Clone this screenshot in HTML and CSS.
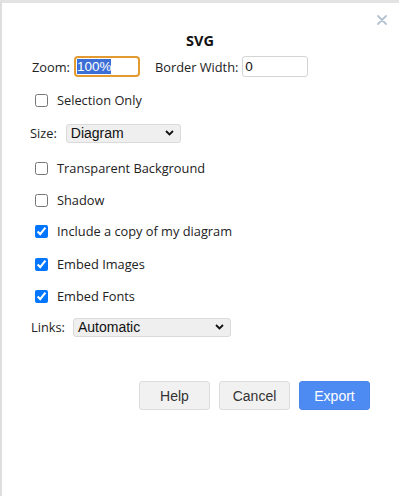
FILE: index.html
```html
<!DOCTYPE html>
<html>
<head>
<meta charset="utf-8">
<link rel="stylesheet" href="styles.css">
</head>
<body>
<div class="dialog">
  <div class="close" aria-label="Close">
    <svg width="10" height="10" viewBox="0 0 10 10"><path d="M1 1L9 9M9 1L1 9" stroke="#b4c2d3" stroke-width="1.8" stroke-linecap="round"/></svg>
  </div>
  <div class="title">SVG</div>
  <div class="row row-zoom">
    <span class="lbl">Zoom:</span>
    <div class="field field-focus"><span class="sel">100%</span></div>
    <span class="lbl lbl-bw">Border Width:</span>
    <div class="field field-bw">0</div>
  </div>
  <label class="row check r-sel"><input type="checkbox"><span>Selection Only</span></label>
  <div class="row r-size">
    <span class="lbl">Size:</span>
    <div class="select select-size"><span>Diagram</span>
      <svg class="chev" width="9" height="6" viewBox="0 0 9 6"><path d="M1 1L4.5 4.5L8 1" fill="none" stroke="#111" stroke-width="1.8"/></svg>
    </div>
  </div>
  <label class="row check r-trans"><input type="checkbox"><span>Transparent Background</span></label>
  <label class="row check r-shadow"><input type="checkbox"><span>Shadow</span></label>
  <label class="row check r-inc"><input type="checkbox" checked><span>Include a copy of my diagram</span></label>
  <label class="row check r-img"><input type="checkbox" checked><span>Embed Images</span></label>
  <label class="row check r-font"><input type="checkbox" checked><span>Embed Fonts</span></label>
  <div class="row r-links">
    <span class="lbl">Links:</span>
    <div class="select select-links"><span>Automatic</span>
      <svg class="chev" width="9" height="6" viewBox="0 0 9 6"><path d="M1 1L4.5 4.5L8 1" fill="none" stroke="#111" stroke-width="1.8"/></svg>
    </div>
  </div>
  <div class="buttons">
    <button class="btn">Help</button>
    <button class="btn">Cancel</button>
    <button class="btn btn-primary">Export</button>
  </div>
</div>
</body>
</html>
```

FILE: styles.css
```css
html, body {
  margin: 0;
  padding: 0;
  background: #ffffff;
}
body {
  font-family: "Open Sans", "Noto Sans", sans-serif;
  font-size: 12.8px;
  color: #222;
}
.dialog {
  position: relative;
  box-sizing: border-box;
  width: 399px;
  height: 496px;
  border-top: 3px solid #e3e3e3;
  border-left: 2px solid #dedede;
  padding: 0 29px 0 28px;
  display: flex;
  flex-direction: column;
}
.close {
  position: absolute;
  top: 12px;
  left: 375px;
  width: 10px;
  height: 10px;
  line-height: 0;
}
.title {
  margin-top: 28px;
  height: 20px;
  line-height: 20px;
  text-align: center;
  font-weight: 700;
  font-size: 14.5px;
  color: #111;
}
.row {
  display: flex;
  align-items: center;
  height: 20px;
}
.lbl {
  white-space: nowrap;
}
.row-zoom {
  margin-top: 5px;
  height: 21px;
  padding-left: 2px;
}
.field {
  box-sizing: border-box;
  height: 21px;
  border: 1px solid #d4d4d4;
  border-radius: 3px;
  font-family: "Liberation Sans", Arial, sans-serif;
  font-size: 13.5px;
  line-height: 19px;
  padding-left: 2px;
  color: #111;
}
.field-focus {
  width: 66px;
  margin-left: 4px;
  border: 2px solid #e39b2f;
  border-radius: 4px;
  line-height: 17px;
  padding-left: 1px;
}
.sel {
  background: #3c6fd5;
  color: #fff;
  display: inline-block;
  height: 15px;
  line-height: 15px;
}
.lbl-bw {
  margin-left: 15px;
}
.field-bw {
  width: 66px;
  margin-left: 4px;
}
.check {
  padding-left: 0;
  cursor: default;
}
.check input {
  margin: 0 9px 0 5px;
  width: 13px;
  height: 13px;
}
.r-sel { margin-top: 13px; }
.r-size { margin-top: 13px; }
.r-trans { margin-top: 15px; }
.r-shadow { margin-top: 12px; }
.r-inc { margin-top: 11px; }
.r-img { margin-top: 13px; }
.r-font { margin-top: 12px; }
.r-links { margin-top: 11px; padding-left: 1px; }
.select {
  box-sizing: border-box;
  height: 19px;
  background: #efefef;
  border: 1px solid #dadada;
  border-radius: 3px;
  display: flex;
  align-items: center;
  justify-content: space-between;
  padding: 0 6px 0 4px;
  font-family: "Liberation Sans", Arial, sans-serif;
  font-size: 14px;
  color: #111;
}
.select-size {
  width: 115px;
  margin-left: 9px;
}
.select-links {
  width: 158px;
  margin-left: 8px;
}
.chev {
  display: block;
}
.buttons {
  margin-top: 44px;
  display: flex;
  justify-content: flex-end;
  gap: 9px;
}
.btn {
  box-sizing: border-box;
  width: 71px;
  height: 29px;
  border: 1px solid #dcdcdc;
  border-radius: 3px;
  background: #f1f1f1;
  font-family: "Liberation Sans", Arial, sans-serif;
  font-size: 14px;
  color: #333;
  padding: 0;
}
.btn-primary {
  background: #4d8bf3;
  border-color: #4a86e8;
  color: #fff;
}
```
